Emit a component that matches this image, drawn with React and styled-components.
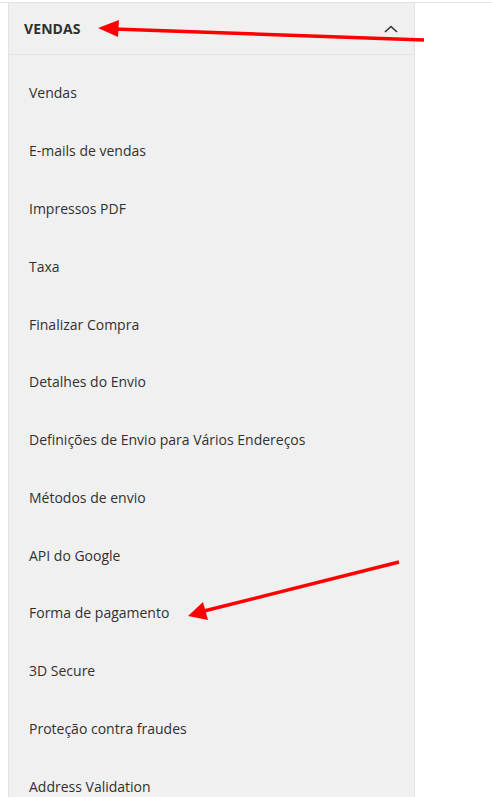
import React from 'react';
import styled, { createGlobalStyle } from 'styled-components';

const GlobalStyle = createGlobalStyle`
  html, body {
    margin: 0;
    padding: 0;
    background: #ffffff;
    font-family: "Open Sans", "Noto Sans", Arial, sans-serif;
  }
`;

const Page = styled.div`
  position: relative;
  width: 492px;
  height: 797px;
  overflow: hidden;
  padding-top: 2px;
  box-sizing: border-box;
`;

const TopRule = styled.div`
  height: 1px;
  background: #e3e3e3;
`;

const Nav = styled.nav`
  margin-left: 8px;
  width: 407px;
  background: #f0f0f0;
  border-left: 1px solid #e3e3e3;
  border-right: 1px solid #e3e3e3;
  box-sizing: border-box;
  min-height: 800px;
`;

const Header = styled.div`
  display: flex;
  align-items: center;
  justify-content: space-between;
  height: 51px;
  padding: 0 16px 0 15px;
  border-bottom: 1px solid #e3e3e3;
`;

const Title = styled.span`
  font-size: 14px;
  font-weight: 700;
  color: #303030;
  letter-spacing: 0.1px;
`;

const List = styled.ul`
  list-style: none;
  margin: 0;
  padding: 9px 0 0;
`;

const Item = styled.li`
  padding: 19.4px 0 19.4px 20px;
  font-size: 14px;
  line-height: 19px;
  color: #303030;
`;

const Arrows = styled.svg`
  position: absolute;
  left: 0;
  top: 0;
  pointer-events: none;
`;

const items = [
  'Vendas',
  'E-mails de vendas',
  'Impressos PDF',
  'Taxa',
  'Finalizar Compra',
  'Detalhes do Envio',
  'Definições de Envio para Vários Endereços',
  'Métodos de envio',
  'API do Google',
  'Forma de pagamento',
  '3D Secure',
  'Proteção contra fraudes',
  'Address Validation',
];

const App = () => (
  <>
    <GlobalStyle />
    <Page>
      <TopRule />
      <Nav>
        <Header>
          <Title>VENDAS</Title>
          <svg width="14" height="8" viewBox="0 0 14 8">
            <path d="M1 7 L7 1.5 L13 7" fill="none" stroke="#303030" strokeWidth="1.6" />
          </svg>
        </Header>
        <List>
          {items.map((label) => (
            <Item key={label}>{label}</Item>
          ))}
        </List>
      </Nav>
      <Arrows width="492" height="797" viewBox="0 0 492 797">
        <line x1="424" y1="40" x2="114" y2="29" stroke="#f00" strokeWidth="3.5" />
        <polygon points="98,28 119,20 118,37" fill="#f00" />
        <line x1="399" y1="562" x2="204" y2="611" stroke="#f00" strokeWidth="3.5" />
        <polygon points="188,616 203,602 208,620" fill="#f00" />
      </Arrows>
    </Page>
  </>
);

export default App;
